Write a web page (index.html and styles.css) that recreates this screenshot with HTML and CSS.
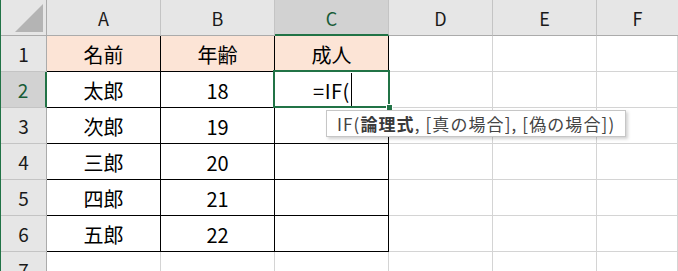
FILE: index.html
```html
<html>
  <head>
    <title>Book1</title>
    <link rel="stylesheet" href="styles.css">
  </head>
  <body>
    <div class="window">
      <div class="sheet">
        <div class="corner"><span class="corner-tri"></span></div>
        <div class="col-head">A</div>
        <div class="col-head">B</div>
        <div class="col-head is-active">C</div>
        <div class="col-head">D</div>
        <div class="col-head">E</div>
        <div class="col-head last">F</div>

        <div class="row-head">1</div>
        <div class="cell title edge">名前</div>
        <div class="cell title edge">年齢</div>
        <div class="cell title edge">成人</div>
        <div class="cell"></div>
        <div class="cell"></div>
        <div class="cell"></div>

        <div class="row-head is-active">2</div>
        <div class="cell edge">太郎</div>
        <div class="cell edge num">18</div>
        <div class="cell edge editing">=IF(<span class="caret"></span></div>
        <div class="cell"></div>
        <div class="cell"></div>
        <div class="cell"></div>

        <div class="row-head">3</div>
        <div class="cell edge">次郎</div>
        <div class="cell edge num">19</div>
        <div class="cell edge"></div>
        <div class="cell"></div>
        <div class="cell"></div>
        <div class="cell"></div>

        <div class="row-head">4</div>
        <div class="cell edge">三郎</div>
        <div class="cell edge num">20</div>
        <div class="cell edge"></div>
        <div class="cell"></div>
        <div class="cell"></div>
        <div class="cell"></div>

        <div class="row-head">5</div>
        <div class="cell edge">四郎</div>
        <div class="cell edge num">21</div>
        <div class="cell edge"></div>
        <div class="cell"></div>
        <div class="cell"></div>
        <div class="cell"></div>

        <div class="row-head">6</div>
        <div class="cell edge">五郎</div>
        <div class="cell edge num">22</div>
        <div class="cell edge"></div>
        <div class="cell"></div>
        <div class="cell"></div>
        <div class="cell"></div>

        <div class="row-head">7</div>
        <div class="cell"></div>
        <div class="cell"></div>
        <div class="cell"></div>
        <div class="cell"></div>
        <div class="cell"></div>
        <div class="cell"></div>

        <!-- active cell frame + fill handle -->
        <div class="selection"><span class="fill-handle"></span></div>

        <!-- function argument hint -->
        <div class="hint">IF(<b>論理式</b>, [真の場合], [偽の場合])</div>
      </div>
    </div>
  </body>
</html>
```

FILE: styles.css
```css
body {
  margin: 0;
  width: 678px;
  height: 271px;
  overflow: hidden;
  background-color: #ffffff;
  font-family: "Noto Sans CJK JP", "DejaVu Sans", sans-serif;
}

.window {
  border-left: 1px solid #217346;
  height: 100%;
}

.sheet {
  position: relative;
  display: grid;
  grid-template-columns: 46px 114px 114px 114px 104px 104px 1fr;
  grid-template-rows: repeat(8, 36px);

  div {
    box-sizing: border-box;
  }

  .corner {
    background-color: #e6e6e6;
    border-right: 1px solid #ababab;
    border-bottom: 1px solid #ababab;
    position: relative;

    .corner-tri {
      position: absolute;
      right: 3px;
      bottom: 3px;
      width: 0;
      height: 0;
      border-left: 28px solid transparent;
      border-bottom: 28px solid #b4b4b4;
    }
  }

  .col-head {
    background-color: #e6e6e6;
    border-right: 1px solid #c4c4c4;
    border-bottom: 1px solid #ababab;
    color: #1a1a1a;
    font-size: 18px;
    display: flex;
    align-items: center;
    justify-content: center;
    padding-top: 1px;

    &.is-active {
      background-color: #d2d2d2;
      border-bottom: 2px solid #217346;
      color: #185c37;
    }

    &.last {
      border-right: none;
    }
  }

  .row-head {
    background-color: #e6e6e6;
    border-right: 1px solid #ababab;
    border-bottom: 1px solid #c4c4c4;
    color: #1a1a1a;
    font-size: 19px;
    display: flex;
    align-items: center;
    justify-content: center;

    &.is-active {
      background-color: #d2d2d2;
      border-right: 2px solid #217346;
      color: #185c37;
    }
  }

  .cell {
    border-right: 1px solid #d4d4d4;
    border-bottom: 1px solid #d4d4d4;
    color: #000000;
    font-size: 20px;
    display: flex;
    align-items: center;
    justify-content: center;
    padding-top: 1px;

    &.edge {
      border-right-color: #000000;
      border-bottom-color: #000000;
    }

    &.title {
      background-color: #fce4d6;
    }

    &.editing {
      padding-left: 2px;
      letter-spacing: 0.5px;
    }

    .caret {
      display: inline-block;
      width: 0;
      height: 34px;
      border-left: 1px solid #000000;
      margin-left: 1px;
    }
  }

  .selection {
    position: absolute;
    left: 272px;
    top: 70px;
    width: 117px;
    height: 38px;
    border: 2px solid #217346;

    .fill-handle {
      position: absolute;
      right: -5px;
      bottom: -5px;
      width: 5px;
      height: 5px;
      background-color: #217346;
      border: 1px solid #ffffff;
    }
  }

  .hint {
    position: absolute;
    left: 325px;
    top: 110px;
    height: 27px;
    padding: 0 10px 0 10px;
    background-color: #ffffff;
    border: 1px solid #c6c6c6;
    box-shadow: 2px 2px 3px rgba(0, 0, 0, 0.18);
    color: #444444;
    font-size: 17px;
    letter-spacing: 1.1px;
    white-space: nowrap;
    display: flex;
    align-items: center;

    b {
      font-weight: bold;
      color: #3a3a3a;
    }
  }
}
```
